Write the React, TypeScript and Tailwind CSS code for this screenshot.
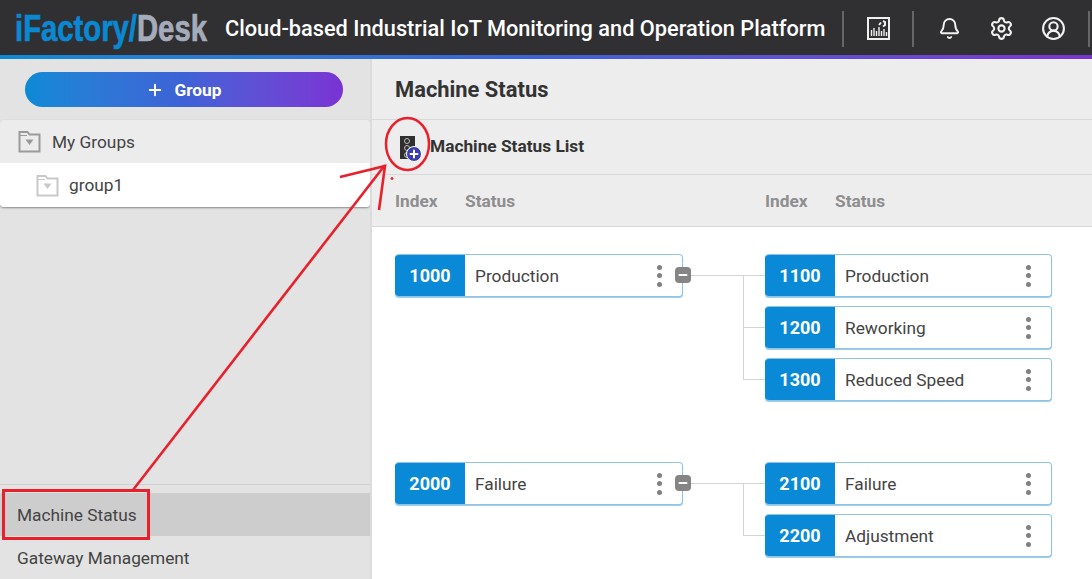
import { Bell, CircleUserRound, Minus, Plus, Settings } from "lucide-react";

const trees = [
  {
    index: "1000",
    status: "Production",
    gap: "mb-[61px]",
    children: [
      { index: "1100", status: "Production" },
      { index: "1200", status: "Reworking" },
      { index: "1300", status: "Reduced Speed" },
    ],
  },
  {
    index: "2000",
    status: "Failure",
    gap: "",
    children: [
      { index: "2100", status: "Failure" },
      { index: "2200", status: "Adjustment" },
    ],
  },
];

function FolderIcon({ light }: { light?: boolean }) {
  const stroke = light ? "#c9c9c9" : "#9a9a9a";
  return (
    <svg width="23" height="23" viewBox="0 0 23 23" fill="none">
      <path d="M1.5 21.5V2h8l2 2.5h10v17z" stroke={stroke} strokeWidth="2" />
      <path d="M1 5.5h8" stroke={stroke} strokeWidth="1" />
      <path d="M7.5 9.500h8l-4 5.500z" fill={stroke} />
    </svg>
  );
}

function ReportIcon() {
  return (
    <svg width="23" height="23" viewBox="0 0 23 23" fill="none" stroke="#f0f0f0">
      <rect x="1" y="1" width="21" height="21" strokeWidth="2" />
      <path d="M4.5 19v-6M7 19v-8M9.500 19v-5M12 19v-9M14.500 19v-5M17 19v-7M19.500 19v-4" strokeWidth="1.4" />
      <path d="M12 8l2-2.500M16 9.500l2-1.500v-3l-2-1" strokeWidth="2" />
    </svg>
  );
}

function Divider() {
  return <div className="h-[36px] w-[2px] bg-[#666668]" />;
}

function Kebab() {
  return (
    <div className="mr-[20px] flex flex-col gap-[3.5px]">
      <span className="size-[5px] rounded-full bg-[#808080]" />
      <span className="size-[5px] rounded-full bg-[#808080]" />
      <span className="size-[5px] rounded-full bg-[#808080]" />
    </div>
  );
}

function Node({ index, status }: { index: string; status: string }) {
  return (
    <div className="flex h-[43px] flex-1 items-center overflow-hidden rounded-[4px] border border-l-0 border-[#8fc4e6] bg-white shadow-[0_1px_1px_#9cc8e4]">
      <div className="flex h-[43px] w-[70px] shrink-0 items-center justify-center bg-[#0a8ad6] text-[18px] font-bold text-white">
        {index}
      </div>
      <div className="flex-1 pt-[2px] pl-[10px] text-[17.3px] text-[#444]">{status}</div>
      <Kebab />
    </div>
  );
}

function ChildRow({
  index,
  status,
  first,
  last,
}: {
  index: string;
  status: string;
  first: boolean;
  last: boolean;
}) {
  return (
    <div className="flex">
      <div className="flex w-[22px] flex-col">
        <div className={`h-[22px] border-b border-[#d4d4d4] ${first ? "" : "border-l"}`} />
        <div className={`flex-1 ${last ? "" : "border-l border-[#d4d4d4]"}`} />
      </div>
      <div className={`flex flex-1 ${last ? "" : "pb-[9px]"}`}>
        <Node index={index} status={status} />
      </div>
    </div>
  );
}

export default function App() {
  return (
    <div className="relative flex h-[579px] w-[1092px] flex-col overflow-hidden bg-white font-['Roboto',sans-serif]">
      <header className="flex h-[55px] shrink-0 items-center bg-[#303032] pt-[2px]">
        <div className="w-[225px] pl-[15px] font-['Liberation_Sans',sans-serif] text-[36px] font-bold whitespace-nowrap [-webkit-text-stroke:0.7px_currentColor]">
          <div className="origin-left scale-x-[0.813]">
            <span className="text-[#0a88d2]">iFactory/</span>
            <span className="text-[#a4abba]">Desk</span>
          </div>
        </div>
        <div className="w-[617px] pt-[2px] text-[21.75px] font-medium whitespace-nowrap text-white">
          Cloud-based Industrial IoT Monitoring and Operation Platform
        </div>
        <Divider />
        <div className="flex w-[68px] justify-center">
          <ReportIcon />
        </div>
        <Divider />
        <div className="flex w-[174px] items-center pl-[24px]">
          <Bell size={23} color="#f2f2f2" strokeWidth={2} />
          <Settings size={25} color="#f2f2f2" strokeWidth={2} className="ml-[28px]" />
          <CircleUserRound size={25} color="#f2f2f2" strokeWidth={2} className="ml-[27px]" />
        </div>
        <Divider />
      </header>
      <div className="h-[4px] shrink-0 bg-gradient-to-r from-[#0a8ad6] via-[#3d62d6] to-[#7a34d0]" />

      <div className="flex min-h-0 flex-1">
        <aside className="flex w-[370px] shrink-0 flex-col bg-[#e3e3e3]">
          <div className="flex justify-center pt-[13px] pr-[2px] pb-[13px]">
            <button className="flex h-[35px] w-[318px] items-center justify-center gap-[10px] rounded-full bg-gradient-to-r from-[#0a8ad6] via-[#3d62d6] to-[#7a32d4] text-[17.300px] font-bold text-white">
              <Plus size={18} strokeWidth={2.5} />
              <span className="pt-[2px]">Group</span>
            </button>
          </div>
          <div className="overflow-hidden rounded-[4px] shadow-[0_1px_2px_#8a8a8a]">
            <div className="flex h-[43px] items-center gap-[11px] bg-[#ececec] pl-[18px] text-[17.3px] text-[#444]">
              <FolderIcon />
              <span className="pt-[2px]">My Groups</span>
            </div>
            <div className="flex h-[44px] items-center gap-[10px] bg-white pl-[36px] text-[17.3px] text-[#444]">
              <FolderIcon light />
              <span className="pt-[1px]">group1</span>
            </div>
          </div>
          <div className="mt-auto border-t border-[#cfcfcf] pt-[8px]">
            <div className="flex h-[43px] items-center bg-[#cdcdcd] pt-[3px] pl-[17px] text-[17.3px] text-[#444]">
              Machine Status
            </div>
            <div className="flex h-[43px] items-center pt-[3px] pl-[17px] text-[17.3px] text-[#444]">
              Gateway Management
            </div>
          </div>
        </aside>

        <main className="flex min-w-0 flex-1 flex-col border-l-2 border-[#dcdcdc]">
          <div className="flex h-[61px] shrink-0 items-center border-b border-[#d8d8d8] bg-[#ededed] pt-[3px] pl-[23px] text-[21.9px] font-bold text-[#333]">
            Machine Status
          </div>
          <div className="flex h-[55px] shrink-0 items-center gap-[15px] border-b border-[#d8d8d8] bg-[#ededed] pl-[28px] text-[17.3px] font-bold text-[#333]">
            <div className="relative h-[23px] w-[15px] bg-[#2f2f2f]">
              <div className="absolute top-[2px] left-[4px] flex flex-col gap-[1px]">
                <span className="size-[6px] rounded-full border border-[#bbb]" />
                <span className="size-[6px] rounded-full border border-[#bbb]" />
                <span className="size-[6px] rounded-full border border-[#bbb]" />
              </div>
              <div className="absolute top-[10px] left-[6px] flex size-[16px] items-center justify-center rounded-full border border-white bg-[#3a3fb0]">
                <Plus size={12} color="white" strokeWidth={4} />
              </div>
            </div>
            <span>Machine Status List</span>
          </div>
          <div className="flex h-[52px] shrink-0 items-center border-b border-[#d8d8d8] bg-[#ededed] pt-[3px] pl-[23px] text-[17.3px] font-bold text-[#8e8e8e]">
            <div className="flex w-[370px]">
              <span className="w-[70px]">Index</span>
              <span>Status</span>
            </div>
            <div className="flex">
              <span className="w-[70px]">Index</span>
              <span>Status</span>
            </div>
          </div>

          <div className="flex-1 pt-[27px] pl-[23px]">
            {trees.map((tree) => (
              <div key={tree.index} className={`flex items-start ${tree.gap}`}>
                <div className="relative flex w-[288px]">
                  <Node index={tree.index} status={tree.status} />
                  <div className="absolute top-[13px] right-[-8px] flex h-[16px] w-[16px] items-center justify-center rounded-[4px] bg-[#858585]">
                    <Minus size={12} color="white" strokeWidth={4} />
                  </div>
                </div>
                <div className="h-[22px] w-[60px] border-b border-[#d4d4d4]" />
                <div className="flex w-[309px] flex-col">
                  {tree.children.map((child, i) => (
                    <ChildRow
                      key={child.index}
                      index={child.index}
                      status={child.status}
                      first={i === 0}
                      last={i === tree.children.length - 1}
                    />
                  ))}
                </div>
              </div>
            ))}
          </div>
        </main>
      </div>

      {/* red markup drawn on top of the screenshot */}
      <div className="absolute top-[489px] left-[2px] h-[51px] w-[148px] border-[3px] border-[#e8202c]" />
      <svg className="pointer-events-none absolute inset-0" width="1092" height="579" fill="none" stroke="#e8202c">
        <ellipse cx="407.500" cy="144" rx="21.500" ry="26" strokeWidth="2.500" />
        <path d="M133 490L385 165" strokeWidth="2.600" />
        <path d="M340 177L385 166L379 210" strokeWidth="2.600" />
        <circle cx="392" cy="178.500" r="1" fill="#e8202c" strokeWidth="1" />
      </svg>
    </div>
  );
}
